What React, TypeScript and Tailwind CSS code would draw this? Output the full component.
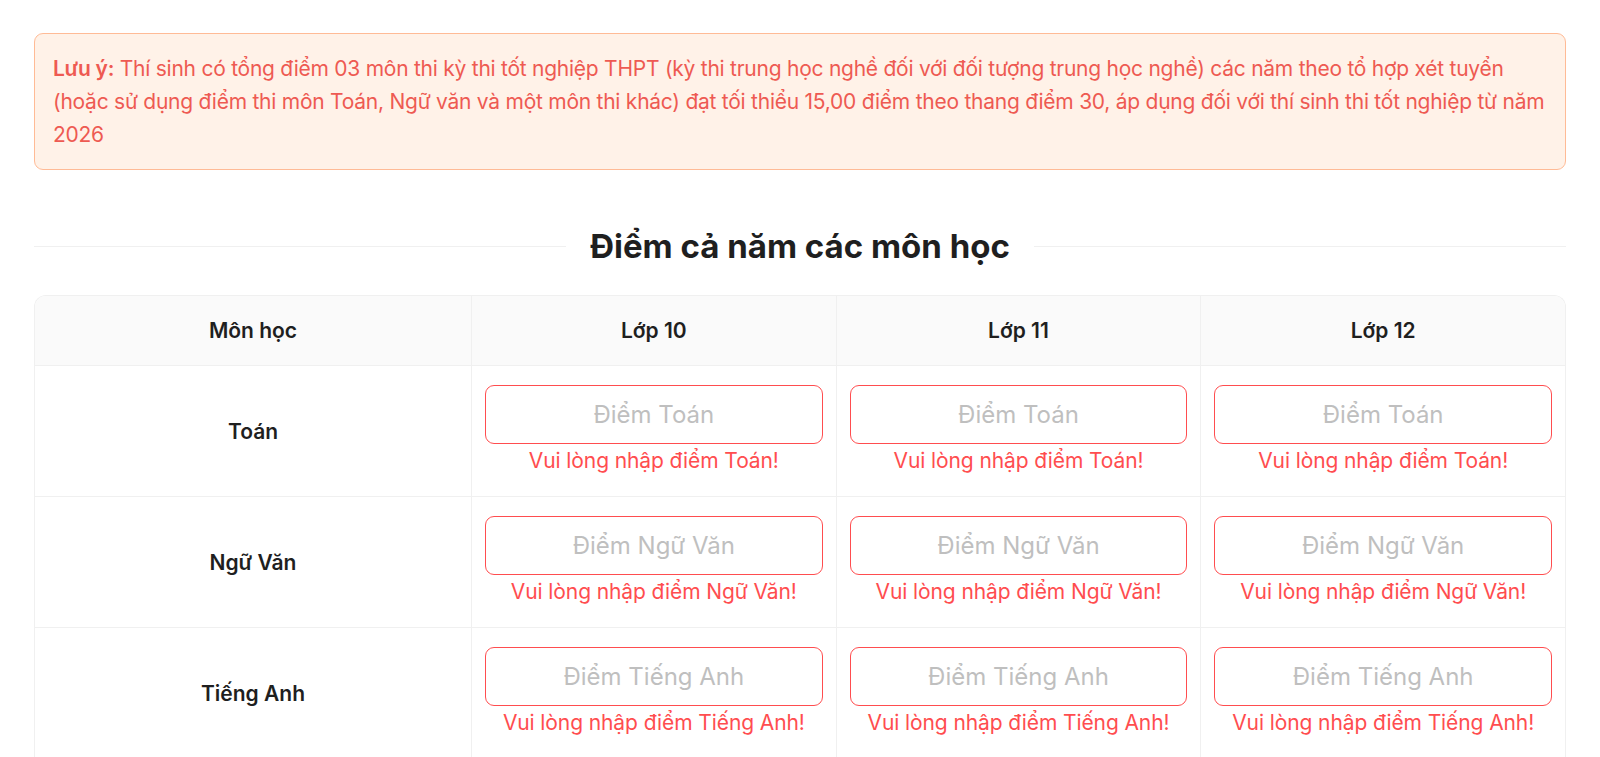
const subjects = ['Toán', 'Ngữ Văn', 'Tiếng Anh']
const grades = ['Lớp 10', 'Lớp 11', 'Lớp 12']

function ScoreCell({ subject }: { subject: string }) {
  return (
    <div className="border-l border-[#f0f0f0] px-[13px] py-[19px]">
      <input
        placeholder={`Điểm ${subject}`}
        className="block h-[59px] w-full rounded-[9px] border border-[#ff4d4f] bg-white px-4 text-center text-[24px] text-[#1f1f1f] outline-none placeholder:text-[#bfbfbf]"
      />
      <div className="text-center text-[21px] leading-[33px] tracking-[-0.1px] text-[#ff4d4f]">Vui lòng nhập điểm {subject}!</div>
    </div>
  )
}

export default function App() {
  return (
    <div className="min-h-screen bg-white px-[34px] pt-[33px] font-['Inter',sans-serif] text-[21px] leading-[33px] text-[#1f1f1f]">
      <div className="rounded-[9px] border border-[#ffbb96] bg-[#fff2e8] p-[18px] tracking-[-0.25px] text-[#ee5a52]">
        <p>
          <b className="font-semibold">Lưu ý:</b> Thí sinh có tổng điểm 03 môn thi kỳ thi tốt nghiệp THPT (kỳ thi trung học nghề đối với đối tượng trung học nghề) các năm theo tổ hợp xét tuyển{' '}
          <br />
          (hoặc sử dụng điểm thi môn Toán, Ngữ văn và một môn thi khác) đạt tối thiểu 15,00 điểm theo thang điểm 30, áp dụng đối với thí sinh thi tốt nghiệp từ năm{' '}
          <br />
          2026
        </p>
      </div>

      <div className="mt-[53px] flex items-center">
        <div className="h-px flex-1 bg-[#f0f0f0]" />
        <h2 className="px-6 text-[33px] font-bold leading-[46px] text-[#1f1f1f]">Điểm cả năm các môn học</h2>
        <div className="h-px flex-1 bg-[#f0f0f0]" />
      </div>

      <div className="mt-[26px] overflow-hidden rounded-t-[12px] border-x border-t border-[#f0f0f0]">
        <div className="grid grid-cols-[436px_1fr_1fr_1fr] bg-[#fafafa] font-semibold">
          <div className="px-3 py-[18px] text-center">Môn học</div>
          {grades.map(g => (
            <div key={g} className="border-l border-[#f0f0f0] px-3 py-[18px] text-center">{g}</div>
          ))}
        </div>
        {subjects.map(s => (
          <div key={s} className="grid grid-cols-[436px_1fr_1fr_1fr] border-t border-[#f0f0f0]">
            <div className="flex items-center justify-center px-3 font-semibold">{s}</div>
            {grades.map(g => <ScoreCell key={g} subject={s} />)}
          </div>
        ))}
        <div className="h-[40px] border-t border-[#f0f0f0]" />
      </div>
    </div>
  )
}
